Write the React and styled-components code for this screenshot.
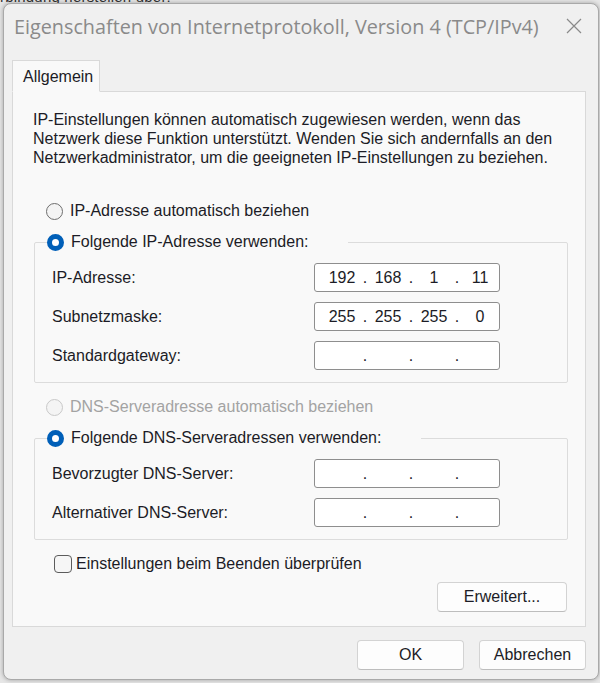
import styled, { createGlobalStyle } from "styled-components";

const GlobalStyle = createGlobalStyle`
  html, body {
    margin: 0;
    padding: 0;
    background: #dcdcdc;
  }
  * {
    box-sizing: border-box;
  }
`;

const Screen = styled.div`
  position: relative;
  width: 600px;
  height: 683px;
  overflow: hidden;
  background: #e6e6e6;
  padding: 3px 1px 0 3px;
`;

const BackdropText = styled.div`
  position: absolute;
  top: -12px;
  left: 0;
  font-family: "Liberation Sans", Arial, sans-serif;
  font-size: 15px;
  color: #333;
  letter-spacing: 0.2px;
`;

const Window = styled.div`
  position: relative;
  width: 596px;
  height: 677px;
  background: #f0f0f0;
  border: 1px solid #a9a9a9;
  border-radius: 8px;
  box-shadow: 0 0 4px rgba(0, 0, 0, 0.3);
  display: flex;
  flex-direction: column;
  font-family: "Liberation Sans", Arial, sans-serif;
  font-size: 16px;
  color: #1c1c26;
`;

const TitleBar = styled.div`
  height: 44px;
  display: flex;
  align-items: center;
  justify-content: space-between;
  padding: 0 15px 0 10px;
`;

const Title = styled.div`
  font-family: "Open Sans", "Noto Sans", sans-serif;
  font-size: 19.8px;
  color: #8a8a8a;
  white-space: nowrap;
`;

const CloseButton = styled.div`
  width: 18px;
  height: 18px;
  display: flex;
  align-items: center;
  justify-content: center;
`;

const Body = styled.div`
  padding: 12px 12px 0 8px;
  display: flex;
  flex-direction: column;
`;

const TabStrip = styled.div`
  display: flex;
  margin-bottom: -1px;
  position: relative;
  z-index: 1;
`;

const Tab = styled.div`
  width: 88px;
  height: 32px;
  padding: 7px 0 0 10px;
  background: #f9f9f9;
  border: 1px solid #d9d9d9;
  border-bottom-color: #f9f9f9;
`;

const Panel = styled.div`
  height: 536px;
  background: #f9f9f9;
  border: 1px solid #d9d9d9;
  padding: 18px 17px 0 20px;
  display: flex;
  flex-direction: column;
`;

const Description = styled.p`
  margin: 0;
  line-height: 19px;
`;

const OptionRow = styled.label`
  display: flex;
  align-items: center;
  gap: 7px;
  height: 20px;
  margin-top: ${(p) => p.$top || 0}px;
  margin-left: 13px;
  color: ${(p) => (p.$disabled ? "#a3a3a3" : "inherit")};
`;

const RadioDot = styled.span`
  width: 17px;
  height: 17px;
  border-radius: 50%;
  flex-shrink: 0;
  background: ${(p) => (p.$checked ? "#ffffff" : "#f4f4f4")};
  border: ${(p) =>
    p.$checked
      ? "5px solid #005fb8"
      : p.$disabled
      ? "1px solid #c9c9c9"
      : "1px solid #6e6e6e"};
`;

const Group = styled.fieldset`
  margin: ${(p) => p.$top || 0}px 0 0 1px;
  width: 534px;
  padding: 0 67px 12px 17px;
  border: 1px solid #dcdcdc;
  border-radius: 2px;
  display: flex;
  flex-direction: column;
  gap: 10px;
`;

const Legend = styled.legend`
  margin-left: -5px;
  padding: 0 ${(p) => p.$gap}px 0 0;
  height: 20px;
  display: flex;
  align-items: center;
  gap: 7px;
`;

const FieldRow = styled.div`
  display: flex;
  align-items: center;
  justify-content: space-between;
  height: 29px;
  margin-top: ${(p) => p.$top || 0}px;
`;

const IpField = styled.div`
  width: 186px;
  height: 29px;
  background: #ffffff;
  border: 1px solid #8e8e8e;
  border-radius: 3px;
  display: flex;
  align-items: center;
  padding-left: 9px;
`;

const Octet = styled.span`
  width: 36px;
  text-align: center;
`;

const Dot = styled.span`
  width: 10px;
  text-align: center;
`;

const CheckRow = styled.label`
  display: flex;
  align-items: center;
  gap: 4px;
  margin: 14px 0 0 21px;
  height: 20px;
`;

const CheckBox = styled.span`
  width: 18px;
  height: 18px;
  border: 1px solid #5c5c5c;
  border-radius: 4px;
  background: #f6f6f6;
`;

const Button = styled.div`
  width: ${(p) => p.$width}px;
  height: 30px;
  display: flex;
  align-items: center;
  justify-content: center;
  background: #fdfdfd;
  border: 1px solid #d3d3d3;
  border-bottom-color: #bdbdbd;
  border-radius: 4px;
`;

const ActionRow = styled.div`
  display: flex;
  justify-content: flex-end;
  margin: 8px 1px 0 0;
`;

const Footer = styled.div`
  display: flex;
  justify-content: flex-end;
  gap: 15px;
  margin-top: 13px;
`;

const IpAddress = ({ value = ["", "", "", ""] }) => (
  <IpField>
    {value.map((part, i) => (
      <span key={i} style={{ display: "contents" }}>
        <Octet>{part}</Octet>
        {i < 3 && <Dot>.</Dot>}
      </span>
    ))}
  </IpField>
);

const CloseIcon = () => (
  <svg width="16" height="16" viewBox="0 0 16 16">
    <path d="M1 1 L15 15 M15 1 L1 15" stroke="#8a8a8a" strokeWidth="1.2" fill="none" />
  </svg>
);

export default function App() {
  return (
    <>
      <GlobalStyle />
      <Screen>
        <BackdropText>rbindung herstellen über:</BackdropText>
        <Window>
          <TitleBar>
            <Title>Eigenschaften von Internetprotokoll, Version 4 (TCP/IPv4)</Title>
            <CloseButton>
              <CloseIcon />
            </CloseButton>
          </TitleBar>
          <Body>
            <TabStrip>
              <Tab>Allgemein</Tab>
            </TabStrip>
            <Panel>
              <Description>
                IP-Einstellungen können automatisch zugewiesen werden, wenn das
                <br />
                Netzwerk diese Funktion unterstützt. Wenden Sie sich andernfalls an den
                <br />
                Netzwerkadministrator, um die geeigneten IP-Einstellungen zu beziehen.
              </Description>

              <OptionRow $top={34}>
                <RadioDot />
                IP-Adresse automatisch beziehen
              </OptionRow>

              <Group $top={11}>
                <Legend $gap={40}>
                  <RadioDot $checked />
                  Folgende IP-Adresse verwenden:
                </Legend>
                <FieldRow $top={11}>
                  IP-Adresse:
                  <IpAddress value={["192", "168", "1", "11"]} />
                </FieldRow>
                <FieldRow>
                  Subnetzmaske:
                  <IpAddress value={["255", "255", "255", "0"]} />
                </FieldRow>
                <FieldRow>
                  Standardgateway:
                  <IpAddress />
                </FieldRow>
              </Group>

              <OptionRow $top={14} $disabled>
                <RadioDot $disabled />
                DNS-Serveradresse automatisch beziehen
              </OptionRow>

              <Group $top={11}>
                <Legend $gap={40}>
                  <RadioDot $checked />
                  Folgende DNS-Serveradressen verwenden:
                </Legend>
                <FieldRow $top={11}>
                  Bevorzugter DNS-Server:
                  <IpAddress />
                </FieldRow>
                <FieldRow>
                  Alternativer DNS-Server:
                  <IpAddress />
                </FieldRow>
              </Group>

              <CheckRow>
                <CheckBox />
                Einstellungen beim Beenden überprüfen
              </CheckRow>

              <ActionRow>
                <Button $width={130}>Erweitert...</Button>
              </ActionRow>
            </Panel>
            <Footer>
              <Button $width={107}>OK</Button>
              <Button $width={107}>Abbrechen</Button>
            </Footer>
          </Body>
        </Window>
      </Screen>
    </>
  );
}
